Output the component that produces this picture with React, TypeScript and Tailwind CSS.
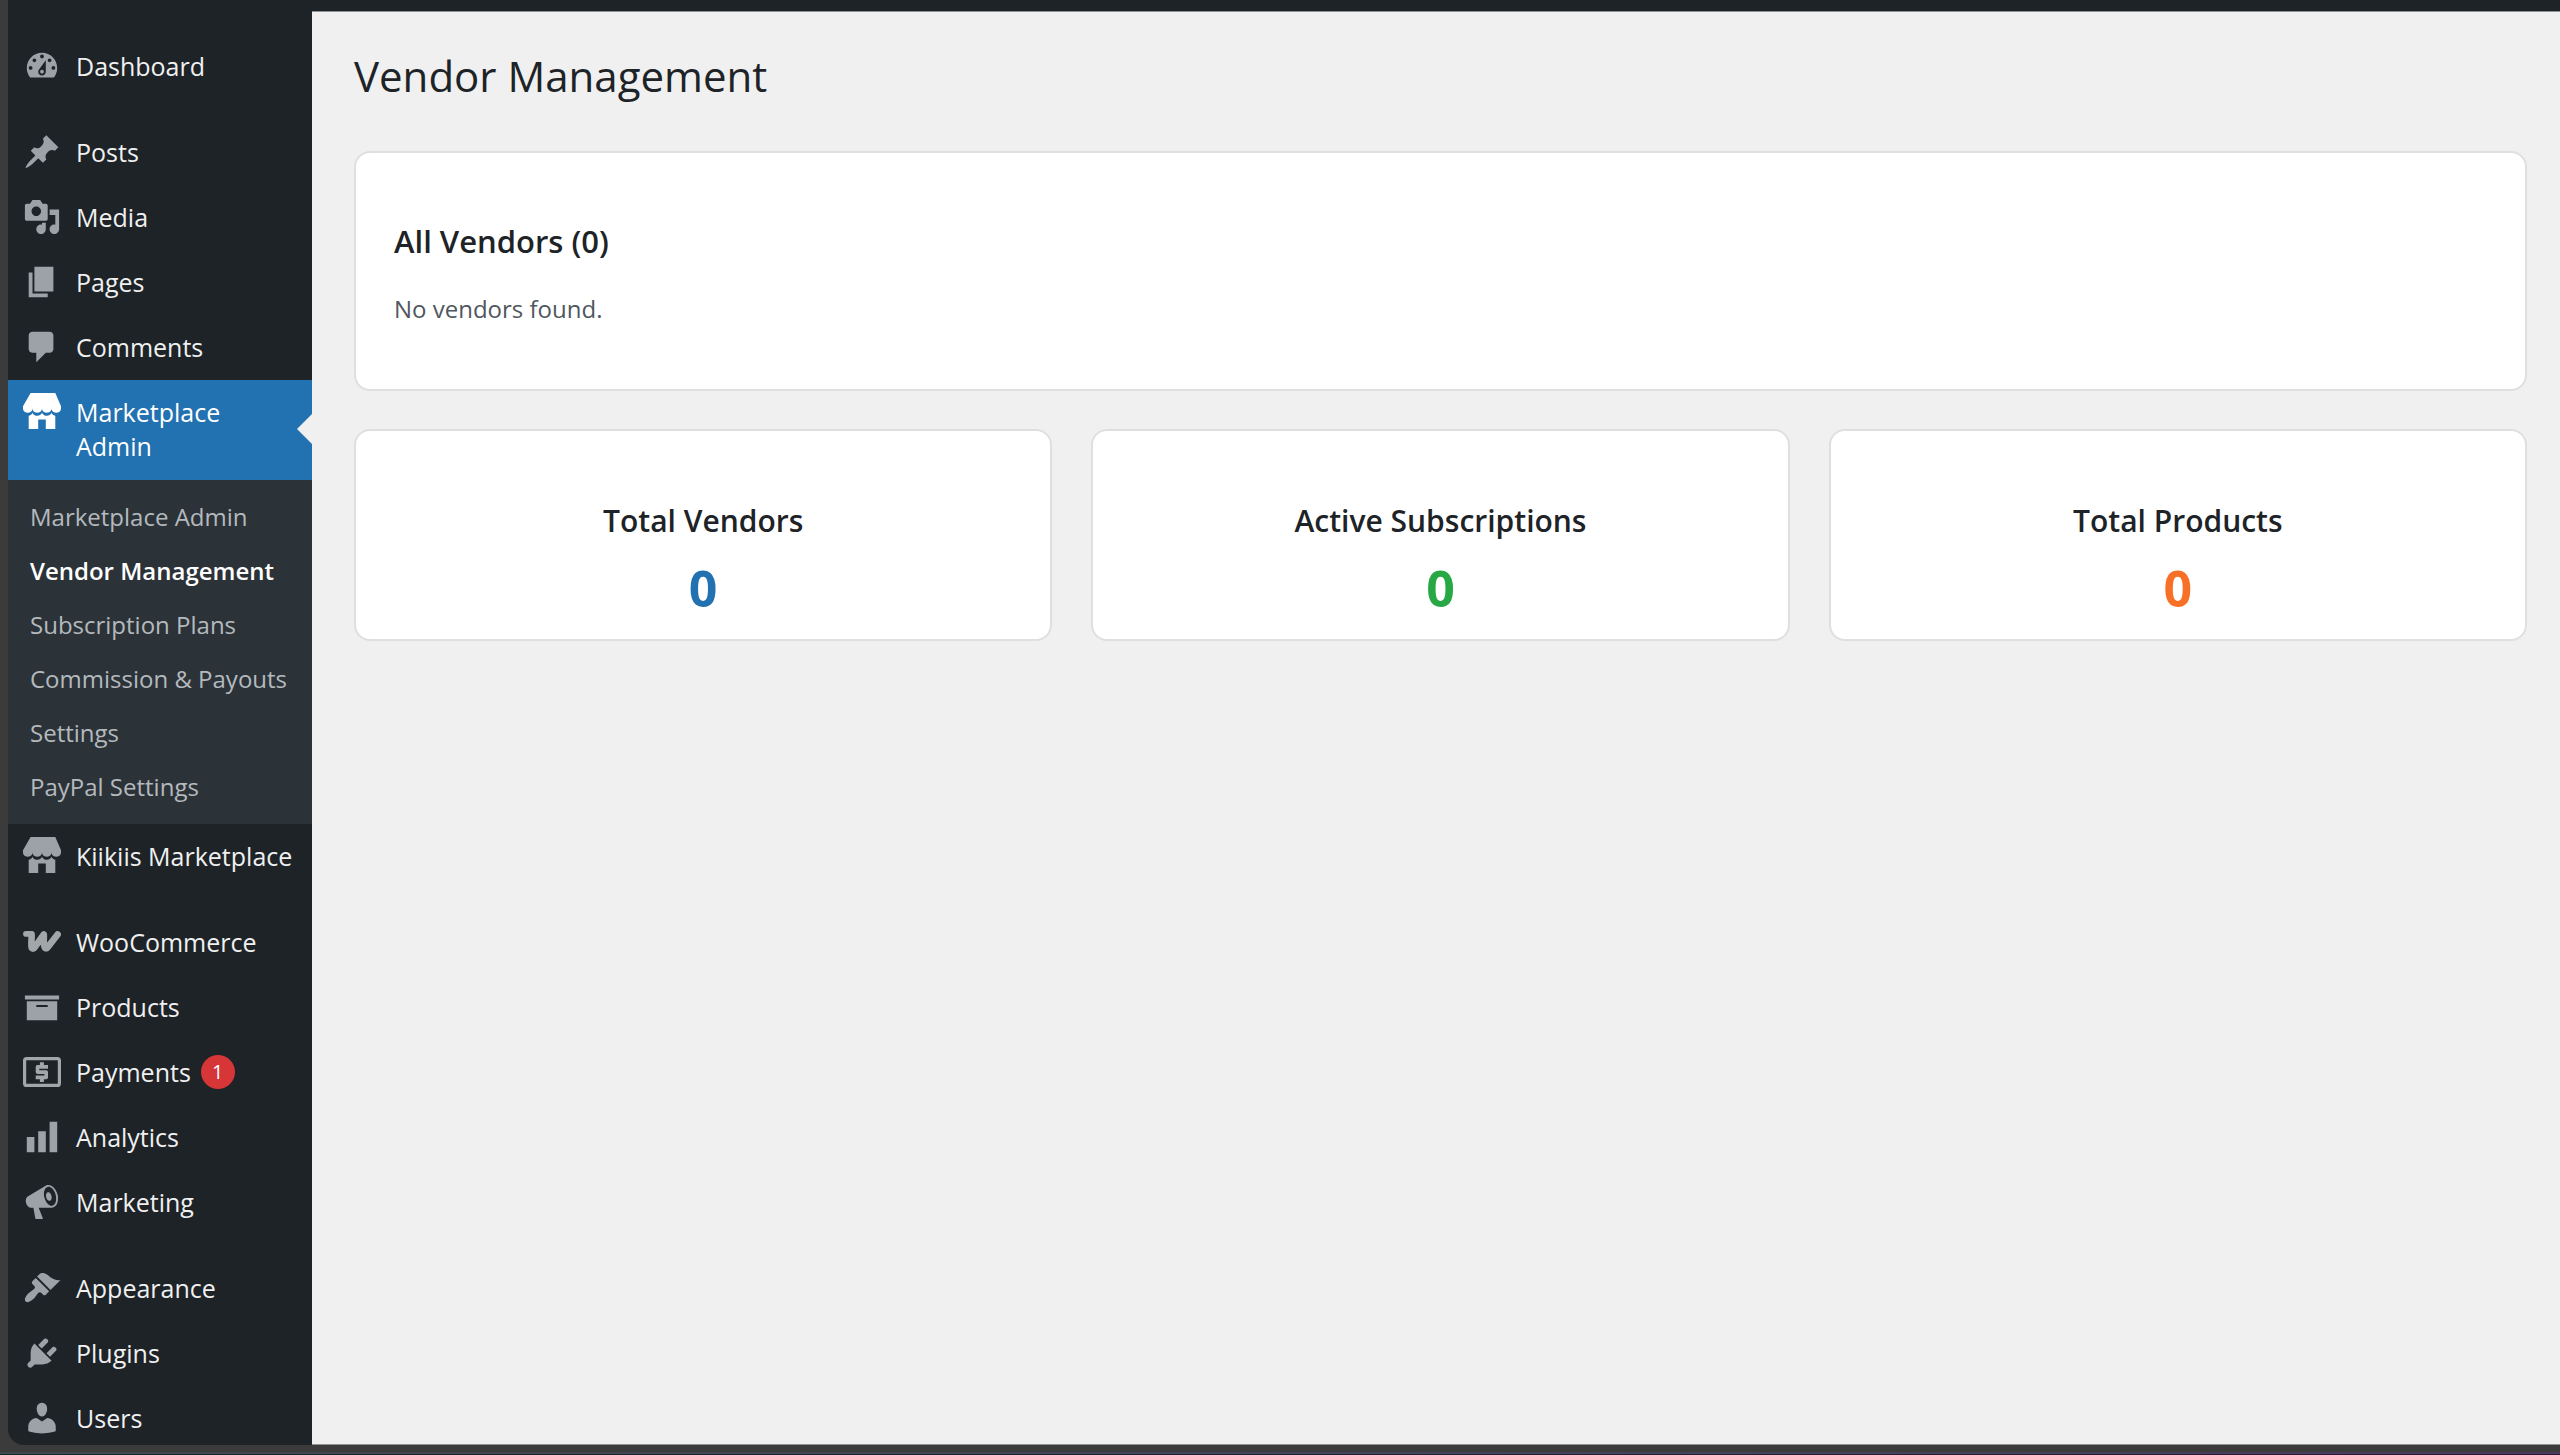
import React from 'react';

interface MenuEntry {
  label: string;
  icon: React.ReactNode;
  badge?: number;
}

interface StatCardProps {
  title: string;
  value: number;
  color: string;
}

const Glyph: React.FC<{ d: string }> = ({ d }) => (
  <svg viewBox="0 0 20 20" className="size-[38px] shrink-0 fill-current" aria-hidden="true">
    <path fillRule="evenodd" d={d} />
  </svg>
);

const paths = {
  dashboard:
    'M3.76 16h12.48c1.1-1.37 1.76-3.11 1.76-5 0-4.42-3.58-8-8-8s-8 3.58-8 8c0 1.89.66 3.63 1.76 5zM10 4c.55 0 1 .45 1 1s-.45 1-1 1-1-.45-1-1 .45-1 1-1zM6 6c.55 0 1 .45 1 1s-.45 1-1 1-1-.45-1-1 .45-1 1-1zm8 0c.55 0 1 .45 1 1s-.45 1-1 1-1-.45-1-1 .45-1 1-1zm-5.37 5.55L12 7v6c0 1.1-.9 2-2 2s-2-.9-2-2c0-.57.24-1.08.63-1.45zM4 10c.55 0 1 .45 1 1s-.45 1-1 1-1-.45-1-1 .45-1 1-1zm12 0c.55 0 1 .45 1 1s-.45 1-1 1-1-.45-1-1 .45-1 1-1zm-5 3c0-.55-.45-1-1-1s-1 .45-1 1 .45 1 1 1 1-.45 1-1z',
  pin: 'M10.44 3.02l1.82-1.82 6.36 6.35-1.83 1.82c-1.05-.68-2.48-.57-3.41.36l-.75.75c-.92.93-1.04 2.35-.35 3.41l-1.83 1.82-2.41-2.41-2.8 2.79c-.42.42-3.38 2.71-3.8 2.29s1.86-3.39 2.28-3.81l2.79-2.79L4.1 9.36l1.83-1.82c1.05.69 2.48.57 3.4-.36l.75-.75c.93-.92 1.05-2.35.36-3.41z',
  media:
    'M13 11V4c0-.55-.45-1-1-1h-1.67L9 1H5L3.67 3H2c-.55 0-1 .45-1 1v7c0 .55.45 1 1 1h10c.55 0 1-.45 1-1zM7 4.5c1.38 0 2.5 1.12 2.5 2.5S8.38 9.5 7 9.5 4.5 8.38 4.5 7 5.62 4.5 7 4.5zM14 6h5v10.5c0 1.38-1.12 2.5-2.5 2.5S14 17.88 14 16.5s1.12-2.5 2.5-2.5c.17 0 .34.02.5.05V9h-3V6zm-4 8.05V13h2v3.5c0 1.38-1.12 2.5-2.5 2.5S7 17.88 7 16.5 8.12 14 9.5 14c.17 0 .34.02.5.05z',
  pages: 'M6 15V2h10v13H6zm-1 1h8v2H3V5h2v11z',
  comments: 'M5 2h9c1.1 0 2 .9 2 2v7c0 1.1-.9 2-2 2h-2l-5 5v-5H5c-1.1 0-2-.9-2-2V4c0-1.1.9-2 2-2z',
  store:
    'M1 10c.41.29.96.43 1.5.43.55 0 1.09-.14 1.5-.43.62-.46 1-1.17 1-2 0 .83.37 1.54 1 2 .41.29.96.43 1.5.43.55 0 1.09-.14 1.5-.43.62-.46 1-1.17 1-2 0 .83.37 1.54 1 2 .41.29.96.43 1.51.43.54 0 1.08-.14 1.49-.43.62-.46 1-1.17 1-2 0 .83.37 1.54 1 2 .41.29.96.43 1.5.43.55 0 1.09-.14 1.5-.43.63-.46 1-1.17 1-2V7l-3-7H4L0 7v1c0 .83.37 1.54 1 2zm2 8.99h5v-5h4v5h5v-7c-.37-.05-.72-.22-1-.43-.63-.45-1-.73-1-1.56 0 .83-.38 1.11-1 1.56-.41.3-.95.43-1.49.44-.55 0-1.1-.14-1.51-.44-.63-.45-1-.73-1-1.56 0 .83-.38 1.11-1 1.56-.41.3-.95.43-1.5.44-.54 0-1.09-.14-1.5-.44-.63-.45-1-.73-1-1.57 0 .84-.38 1.12-1 1.57-.29.21-.63.38-1 .44v6.99z',
  archive: 'M19 4v2H1V4h18zM2 7h16v10H2V7zm11 3V9H7v1h6z',
  chart: 'M18 18V2h-4v16h4zm-6 0V7H8v11h4zm-6 0v-8H2v8h4z',
  megaphone:
    'M18.15 5.94c.46 1.62.38 3.22-.02 4.48-.42 1.28-1.26 2.18-2.3 2.48-.16.06-.26.06-.4.06-.06.02-.12.02-.18.02-.06.02-.14.02-.22.02h-6.8l2.22 5.5c.02.14-.06.26-.14.34-.08.1-.24.16-.34.16H6.95c-.1 0-.26-.06-.34-.16-.08-.08-.16-.2-.14-.34l-1-5.5H4.25l-.02-.02c-.5.06-1.08-.18-1.54-.62s-.88-1.08-1.06-1.88c-.24-.8-.2-1.56-.02-2.2.18-.62.58-1.08 1.06-1.3l.02-.02 9-5.4c.1-.06.18-.1.24-.16.06-.04.14-.08.24-.12.16-.08.28-.12.5-.18 1.04-.3 2.24.1 3.22.98s1.84 2.24 2.26 3.86zm-2.58 5.98h-.02c.4-.1.74-.34 1.04-.7.58-.7.86-1.76.86-3.04 0-.64-.1-1.3-.28-1.98-.34-1.36-1.02-2.5-1.78-3.24s-1.68-1.1-2.46-.88c-.82.22-1.4.96-1.7 2-.32 1.04-.28 2.36.06 3.72.38 1.36 1 2.5 1.8 3.24.78.74 1.62 1.1 2.48.88zm-2.54-7.08c.22-.04.42-.02.62.04.38.16.76.48 1.02 1s.42 1.2.42 1.78c0 .3-.04.56-.12.8-.18.48-.44.84-.86.94-.34.1-.8-.06-1.14-.4s-.64-.86-.78-1.5c-.18-.62-.12-1.24.02-1.72s.48-.84.82-.94z',
  brush:
    'M14.48 11.06L7.41 3.99l1.5-1.5c.5-.56 2.3-.47 3.51.32 1.21.8 1.43 1.28 2.91 2.1 1.18.64 2.45 1.26 4.45.85zm-.71.71L6.7 4.7 4.93 6.47c-.39.39-.39 1.02 0 1.41l1.06 1.06c.39.39.39 1.03 0 1.42-.6.6-1.43 1.11-2.21 1.69-.35.26-.7.53-1.01.84C1.43 14.23.4 16.08 1.4 17.07c.99 1 2.84-.03 4.18-1.36.31-.31.58-.66.85-1.02.57-.78 1.08-1.61 1.69-2.21.39-.39 1.02-.39 1.41 0l1.06 1.06c.39.39 1.02.39 1.41 0z',
  plug: 'M13.11 4.36L9.87 7.6 8 5.73l3.24-3.24c.35-.34 1.05-.2 1.56.32.52.51.66 1.21.31 1.55zm-8 1.77l.91-1.12 9.01 9.01-1.19.84c-.71.71-2.63 1.16-3.82 1.16H6.14L4.9 17.26c-.59.59-1.54.59-2.12 0-.59-.58-.59-1.53 0-2.12l1.24-1.24v-3.88c0-1.13.4-3.19 1.09-3.89zm7.26 3.97l3.24-3.24c.34-.35 1.04-.21 1.55.31.52.51.66 1.21.31 1.55l-3.24 3.25z',
  user: 'M10 9.25c-2.27 0-2.73-3.44-2.73-3.44C7 4.02 7.82 2 9.97 2c2.16 0 2.98 2.02 2.71 3.81 0 0-.41 3.44-2.68 3.44zm0 2.57L12.72 10c2.39 0 4.52 2.33 4.52 4.53v2.49s-3.65 1.13-7.24 1.13c-3.65 0-7.24-1.13-7.24-1.13v-2.49c0-2.25 1.94-4.48 4.47-4.48z',
};

const WooIcon = () => (
  <svg
    viewBox="0 0 38 38"
    className="size-[38px] shrink-0 fill-none stroke-[#a2a6a9]"
    strokeLinecap="round"
    strokeLinejoin="round"
    aria-hidden="true"
  >
    <path strokeWidth="5.6" d="M2.9 10.9h5" />
    <path
      strokeWidth="6.6"
      d="M8.600 11.400C8.800 16 8.100 20 8.500 23.700c.2 2.300 2.100 2.500 3.400.5L20.800 11.400c.3 4-.7 8.300.7 12.300.6 2 2.300 2.200 3.400.4L34.600 11.400"
    />
  </svg>
);

const PaymentsIcon = () => (
  <svg viewBox="0 0 38 38" className="size-[38px] shrink-0 fill-none stroke-[#a2a6a9]" aria-hidden="true">
    <rect x="1.600" y="5.600" width="34.800" height="26.800" rx="2" strokeWidth="3.200" />
    <path strokeWidth="3.600" strokeLinejoin="round" d="M25 13.900H14.500v5.200h8.700v5.300H12.700" />
    <path strokeWidth="4" d="M18.900 9.300v4M18.900 25v4" />
  </svg>
);

const groups: MenuEntry[][] = [
  [{ label: 'Dashboard', icon: <Glyph d={paths.dashboard} /> }],
  [
    { label: 'Posts', icon: <Glyph d={paths.pin} /> },
    { label: 'Media', icon: <Glyph d={paths.media} /> },
    { label: 'Pages', icon: <Glyph d={paths.pages} /> },
    { label: 'Comments', icon: <Glyph d={paths.comments} /> },
    { label: 'Marketplace Admin', icon: <Glyph d={paths.store} /> },
    { label: 'Kiikiis Marketplace', icon: <Glyph d={paths.store} /> },
  ],
  [
    { label: 'WooCommerce', icon: <WooIcon /> },
    { label: 'Products', icon: <Glyph d={paths.archive} /> },
    { label: 'Payments', icon: <PaymentsIcon />, badge: 1 },
    { label: 'Analytics', icon: <Glyph d={paths.chart} /> },
    { label: 'Marketing', icon: <Glyph d={paths.megaphone} /> },
  ],
  [
    { label: 'Appearance', icon: <Glyph d={paths.brush} /> },
    { label: 'Plugins', icon: <Glyph d={paths.plug} /> },
    { label: 'Users', icon: <Glyph d={paths.user} /> },
  ],
];

const submenu = [
  'Marketplace Admin',
  'Vendor Management',
  'Subscription Plans',
  'Commission & Payouts',
  'Settings',
  'PayPal Settings',
];

const activeMenu = 'Marketplace Admin';
const activePage = 'Vendor Management';

const MenuItem: React.FC<{ entry: MenuEntry }> = ({ entry }) => {
  const active = entry.label === activeMenu;

  return (
    <li>
      <a
        href="#"
        className={
          active
            ? 'relative flex h-[100px] gap-[15px] bg-[#2271b1] pt-[13px] pl-[15px] text-white'
            : 'flex h-[65px] gap-[15px] pt-[13px] pl-[15px] text-[#9ca2a7]'
        }
      >
        {entry.icon}
        <span
          className={
            active
              ? 'w-48 pt-[2px] leading-[34px]'
              : 'flex items-center gap-[10px] self-start pt-[2px] leading-[34px] whitespace-nowrap text-[#f0f0f1]'
          }
        >
          {entry.label}
          {entry.badge && (
            <span className="flex size-[34px] items-center justify-center rounded-full bg-[#d63638] text-xl text-white">
              {entry.badge}
            </span>
          )}
        </span>
        {active && (
          <svg viewBox="0 0 15 30" className="absolute top-[34px] right-0 h-[30px] w-[15px] fill-[#f0f0f0]" aria-hidden="true">
            <path d="M15 0v30L0 15z" />
          </svg>
        )}
      </a>
      {active && (
        <ul className="bg-[#2c3338] py-[10px] text-2xl">
          {submenu.map(item => (
            <li key={item}>
              <a
                href="#"
                className={
                  item === activePage
                    ? 'block pl-[22px] leading-[54px] font-semibold whitespace-nowrap text-white'
                    : 'block pl-[22px] leading-[54px] whitespace-nowrap text-[#b4b9be]'
                }
              >
                {item}
              </a>
            </li>
          ))}
        </ul>
      )}
    </li>
  );
};

const StatCard: React.FC<StatCardProps> = ({ title, value, color }) => (
  <section className="rounded-2xl border-2 border-[#dfdfdf] bg-white px-[38px] pt-[70px] pb-4 text-center">
    <h3 className="text-[30px] leading-10 font-semibold">{title}</h3>
    <p className={`mt-3 text-[50px] leading-[70px] font-bold ${color}`}>{value}</p>
  </section>
);

const App: React.FC = () => {
  return (
    <div className="flex h-screen flex-col overflow-hidden bg-[#3b3b3b] font-['Open_Sans','Noto_Sans',sans-serif] text-[#1d2327]">
      <div className="flex min-h-0 flex-1 pl-2">
        <nav className="w-[304px] shrink-0 overflow-hidden rounded-bl-2xl bg-[#1d2327] pt-[34px] text-[25px]">
          {groups.map((group, index) => (
            <ul key={index} className="mb-[21px]">
              {group.map(entry => (
                <MenuItem key={entry.label} entry={entry} />
              ))}
            </ul>
          ))}
        </nav>
        <div className="flex min-w-0 flex-1 flex-col">
          <div className="h-3 shrink-0 border-b border-[#8c8f91] bg-[#1d2327]" />
          <main className="flex-1 border-b border-[#8f9391] bg-[#f0f0f0] pt-9 pr-[33px] pl-[42px]">
            <h1 className="text-[42px] leading-[56px]">Vendor Management</h1>
            <section className="mt-[47px] rounded-2xl border-2 border-[#dfdfdf] bg-white px-[38px] pt-[65px] pb-[60px]">
              <h2 className="text-[31px] leading-[46px] font-semibold">All Vendors (0)</h2>
              <p className="mt-[25px] text-2xl leading-10 text-[#50575e]">No vendors found.</p>
            </section>
            <div className="mt-[38px] grid grid-cols-3 gap-[39px]">
              <StatCard title="Total Vendors" value={0} color="text-[#2271b1]" />
              <StatCard title="Active Subscriptions" value={0} color="text-[#28a745]" />
              <StatCard title="Total Products" value={0} color="text-[#f86f26]" />
            </div>
          </main>
        </div>
      </div>
      {/* lower edge of the window frame */}
      <div className="shrink-0 pt-[7px]">
        <div className="h-[2px] bg-linear-to-r from-[#3d4a4c] via-[#404658] to-[#4a3d5a]" />
        <div className="h-px bg-linear-to-r from-[#15272d] via-[#1e2038] to-[#2c1738]" />
      </div>
    </div>
  );
};

export default App;
